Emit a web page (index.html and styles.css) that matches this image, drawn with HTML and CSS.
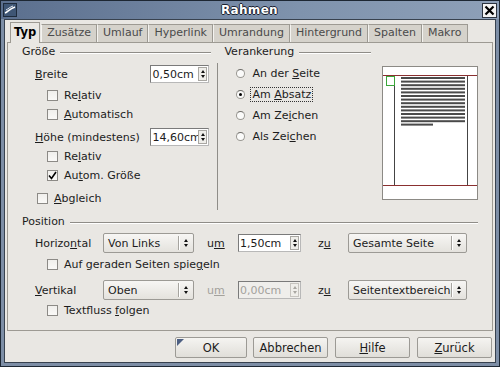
FILE: index.html
```html
<!DOCTYPE html>
<html lang="de">
<head>
  <meta charset="UTF-8" />
  <title>Rahmen</title>
  <link rel="stylesheet" href="styles.css">
</head>
<body>

<div class="window">
  <div class="titlebar">
    <span class="app-icon">
      <svg width="14" height="14" viewBox="0 0 14 14">
        <rect x="0.5" y="0.5" width="13" height="13" fill="#3f5675" stroke="#1e2b3c"/>
        <path d="M2 10 C5 9 6 6 12 4" stroke="#fff" stroke-width="1.6" fill="none"/>
        <path d="M3 7 C5 6 7 4 10 3" stroke="#dfe6ef" stroke-width="1" fill="none"/>
      </svg>
    </span>
    <span class="title">Rahmen</span>
    <span class="close">
      <svg width="11" height="11" viewBox="0 0 11 11">
        <path d="M1.5 1.5 L9.5 9.5 M9.5 1.5 L1.5 9.5" stroke="#000" stroke-width="2.2"/>
      </svg>
    </span>
  </div>

  <div class="client">
    <div class="tabs">
      <div class="tab active">Typ</div>
      <div class="tab">Zusätze</div>
      <div class="tab">Umlauf</div>
      <div class="tab">Hyperlink</div>
      <div class="tab">Umrandung</div>
      <div class="tab">Hintergrund</div>
      <div class="tab">Spalten</div>
      <div class="tab">Makro</div>
    </div>

    <div class="page">
      <div class="top">
        <!-- Größe -->
        <div class="size">
          <div class="group-head"><span>Größe</span></div>
          <div class="field-row first">
            <span class="label"><u>B</u>reite</span>
            <div class="spin"><span class="spin-text">0,50cm</span><span class="spin-btns"><i class="up"></i><i class="down"></i></span></div>
          </div>
          <div class="check-row gap3"><span class="box"></span><span>Re<u>l</u>ativ</span></div>
          <div class="check-row"><span class="box"></span><span><u>A</u>utomatisch</span></div>
          <div class="field-row second">
            <span class="label"><u>H</u>öhe (mindestens)</span>
            <div class="spin"><span class="spin-text">14,60cm</span><span class="spin-btns"><i class="up"></i><i class="down"></i></span></div>
          </div>
          <div class="check-row gap1"><span class="box"></span><span>Re<u>l</u>ativ</span></div>
          <div class="check-row"><span class="box"><svg width="9" height="9" viewBox="0 0 9 9"><path d="M1 4.5 L3.5 7.5 L8 1" stroke="#000" stroke-width="1.6" fill="none"/></svg></span><span>Au<u>t</u>om. Größe</span></div>
          <div class="check-row outer"><span class="box"></span><span><u>A</u>bgleich</span></div>
        </div>

        <div class="vsep"></div>

        <!-- Verankerung -->
        <div class="anchor">
          <div class="group-head"><span>Verankerung</span></div>
          <div class="radios">
            <div class="radio-row"><span class="radio"></span><span>An der <u>S</u>eite</span></div>
            <div class="radio-row"><span class="radio on"></span><span class="focus">Am <u>A</u>bsatz</span></div>
            <div class="radio-row"><span class="radio"></span><span>Am Ze<u>i</u>chen</span></div>
            <div class="radio-row"><span class="radio"></span><span>Als Zei<u>c</u>hen</span></div>
          </div>
        </div>

        <div class="preview">
          <svg width="94" height="132" viewBox="0 0 94 132">
            <line x1="0" y1="8.5" x2="94" y2="8.5" stroke="#8a3030"/>
            <line x1="0" y1="118.5" x2="94" y2="118.5" stroke="#8a3030"/>
            <line x1="11.5" y1="9" x2="11.5" y2="118" stroke="#444"/>
            <line x1="84.5" y1="9" x2="84.5" y2="118" stroke="#444"/>
            <rect x="3.5" y="9.5" width="8" height="9" fill="none" stroke="#3aa63a"/>
            <g fill="#4a4a4a">
              <rect x="18" y="10" width="64" height="2"/>
              <rect x="18" y="13.6" width="64" height="2"/>
              <rect x="18" y="17.2" width="64" height="2"/>
              <rect x="18" y="20.8" width="64" height="2"/>
              <rect x="18" y="24.4" width="64" height="2"/>
              <rect x="18" y="28" width="64" height="2"/>
              <rect x="18" y="31.6" width="64" height="2"/>
              <rect x="18" y="35.2" width="64" height="2"/>
              <rect x="18" y="38.8" width="64" height="2"/>
              <rect x="18" y="42.4" width="64" height="2"/>
              <rect x="18" y="46" width="64" height="2"/>
              <rect x="18" y="49.6" width="64" height="2"/>
              <rect x="18" y="53.2" width="64" height="2"/>
              <rect x="18" y="56.6" width="32" height="2"/>
            </g>
          </svg>
        </div>
      </div>

      <!-- Position -->
      <div class="position">
        <div class="group-head"><span>Position</span></div>
        <div class="pos-row first">
          <span>Horizo<u>n</u>tal</span>
          <div class="select"><span class="select-text">Von Links</span><span class="select-sep"></span><span class="select-arrows"><i class="up"></i><i class="down"></i></span></div>
          <span class="um">u<u>m</u></span>
          <div class="spin wide"><span class="spin-text">1,50cm</span><span class="spin-btns"><i class="up"></i><i class="down"></i></span></div>
          <span class="zu">z<u>u</u></span>
          <div class="select"><span class="select-text">Gesamte Seite</span><span class="select-sep"></span><span class="select-arrows"><i class="up"></i><i class="down"></i></span></div>
        </div>
        <div class="check-row gap2"><span class="box"></span><span>Auf geraden Seiten spie<u>g</u>eln</span></div>
        <div class="pos-row second">
          <span><u>V</u>ertikal</span>
          <div class="select"><span class="select-text">Oben</span><span class="select-sep"></span><span class="select-arrows"><i class="up"></i><i class="down"></i></span></div>
          <span class="um disabled">u<u>m</u></span>
          <div class="spin wide disabled"><span class="spin-text">0,00cm</span><span class="spin-btns"><i class="up"></i><i class="down"></i></span></div>
          <span class="zu">z<u>u</u></span>
          <div class="select"><span class="select-text">Seitentextbereich</span><span class="select-sep"></span><span class="select-arrows"><i class="up"></i><i class="down"></i></span></div>
        </div>
        <div class="check-row gap1"><span class="box"></span><span>Textfluss <u>f</u>olgen</span></div>
      </div>
    </div>

    <div class="buttons">
      <button class="btn default">OK</button>
      <button class="btn">Abbrechen</button>
      <button class="btn"><u>H</u>ilfe</button>
      <button class="btn"><u>Z</u>urück</button>
    </div>
  </div>
</div>

</body>
</html>
```

FILE: styles.css
```css
* {
  margin: 0; padding: 0; box-sizing: border-box;
}
body {
  width: 500px;
  height: 367px;
  overflow: hidden;
  background: #1d2733;
  color: #1c1c1c;
  font-family: "DejaVu Sans", sans-serif;
  font-size: 11px;
}
u {
  text-decoration: underline;
  text-underline-offset: 1px;
}

/* Window frame */
.window {
  width: 500px;
  height: 367px;
  border: 1px solid #1d2733;
  background: #7d8ea6;
  display: flex;
  flex-direction: column;
}
.titlebar {
  height: 18px;
  display: flex;
  align-items: center;
  padding: 0 2px 0 2px;
  background: linear-gradient(to right, #5b6f8e, #7f93ad 60%, #8ea0b8);
}
.app-icon {
  width: 14px;
  height: 14px;
  display: flex;
}
.title {
  flex: 1;
  text-align: center;
  color: #fff;
  font-weight: 700;
  font-size: 12px;
  letter-spacing: 0.3px;
  text-shadow: 1px 0 0 #1a2230, -1px 0 0 #1a2230, 0 1px 0 #1a2230, 0 -1px 0 #1a2230;
}
.close {
  width: 15px;
  height: 15px;
  background: #f4f4f4;
  border: 1px solid #2c3440;
  display: flex;
  align-items: center;
  justify-content: center;
}
.client {
  flex: 1;
  margin: 0 3px 3px;
  border: 1px solid #38424f;
  background: #e9e7e3;
  display: flex;
  flex-direction: column;
}

/* Tabs */
.tabs {
  display: flex;
  align-items: flex-end;
  height: 20px;
  margin: 2px 2px 0;
  padding-left: 3px;
}
.tab {
  height: 18px;
  line-height: 16px;
  padding: 0 5px;
  background: #d5d2cb;
  border: 1px solid #9d9a93;
  border-bottom: none;
  color: #4a4a4a;
}
.tab + .tab {
  border-left-color: #f4f3f0;
}
.tab.active {
  height: 21px;
  margin-right: 1px;
  margin-bottom: -1px;
  line-height: 19px;
  padding: 0 3px;
  background: #e9e7e3;
  color: #000;
  font-weight: 700;
  font-size: 11.5px;
  position: relative;
  z-index: 1;
}

/* Tab page */
.page {
  margin: 0 2px;
  height: 289px;
  border: 1px solid #9d9a93;
  padding: 2px 14px 0;
}
.top {
  display: flex;
  align-items: flex-start;
}
.size {
  width: 190px;
}
.vsep {
  width: 1px;
  height: 147px;
  margin: 18px 6px 0;
  background: #8f8d88;
}
.anchor {
  width: 147px;
}
.group-head {
  display: flex;
  align-items: center;
  gap: 5px;
  height: 14px;
  line-height: 14px;
}
.group-head::after {
  content: "";
  flex: 1;
  height: 1px;
  background: #8f8d88;
  box-shadow: 0 1px 0 #fff;
}

.field-row {
  display: flex;
  align-items: center;
  height: 18px;
  margin: 0 2px 0 13px;
}
.field-row.first { margin-top: 6px; }
.field-row.second { margin-top: 4px; }
.field-row .label { flex: 1; }

.check-row {
  display: flex;
  align-items: center;
  gap: 6px;
  height: 19px;
  margin-left: 25px;
}
.check-row.gap1 { margin-top: 1px; }
.check-row.gap2 { margin-top: 2px; }
.check-row.gap3 { margin-top: 3px; }
.check-row.outer {
  margin-top: 4px;
  margin-left: 15px;
}
.box {
  width: 11px;
  height: 11px;
  border: 1px solid #8c8a86;
  background: linear-gradient(#f0efec, #faf9f7);
  display: flex;
  align-items: center;
  justify-content: center;
}

/* Spin field */
.spin {
  display: flex;
  align-items: center;
  width: 59px;
  height: 18px;
  border: 1px solid #7a7a7a;
  border-right-color: #b8b8b8;
  border-bottom-color: #b8b8b8;
  background: #fff;
}
.spin.wide { width: 63px; }
.spin-text {
  flex: 1;
  min-width: 0;
  padding-left: 1px;
  white-space: nowrap;
  font-size: 11px;
}
.spin-btns {
  flex: none;
  width: 9px;
  height: 14px;
  margin-right: 1px;
  border: 1px solid #a9a7a2;
  background: #efeeea;
  display: flex;
  flex-direction: column;
  align-items: center;
  justify-content: center;
  gap: 2px;
}
.up, .down {
  display: block;
  width: 0;
  height: 0;
  border-left: 2.5px solid transparent;
  border-right: 2.5px solid transparent;
}
.up { border-bottom: 3px solid #111; }
.down { border-top: 3px solid #111; }
.spin.disabled {
  background: #efeeeb;
  color: #a3a19c;
}
.spin.disabled .spin-btns { border-color: #c6c4bf; }
.spin.disabled .up { border-bottom-color: #a8a6a1; }
.spin.disabled .down { border-top-color: #a8a6a1; }

/* Radios */
.radios {
  margin-top: 4px;
}
.radio-row {
  display: flex;
  align-items: center;
  gap: 7px;
  height: 21px;
  margin-left: 12px;
}
.radio {
  width: 9px;
  height: 9px;
  border-radius: 50%;
  border: 1px solid #9a9893;
  border-top-color: #6f6d69;
  background: #fbfbfa;
  display: flex;
  align-items: center;
  justify-content: center;
}
.radio.on::after {
  content: "";
  width: 3px;
  height: 3px;
  border-radius: 50%;
  background: #000;
}
.focus {
  outline: 1px dotted #333;
  padding: 0 1px;
  margin-left: -1px;
}

/* Preview */
.preview {
  width: 96px;
  height: 134px;
  margin: 21px 0 0 11px;
  background: #fff;
  border: 1px solid #8c8a85;
  display: flex;
}

/* Position */
.position {
  margin-top: 5px;
}
.pos-row {
  display: grid;
  grid-template-columns: 68px 91px 44px 63px 47px 119px;
  align-items: center;
  height: 20px;
  margin-left: 13px;
}
.pos-row.first { margin-top: 4px; }
.pos-row.second { margin-top: 6px; }
.um { padding-left: 13px; }
.zu { padding-left: 17px; }
.disabled { color: #a3a19c; }
.pos-row .spin { height: 18px; }

.select {
  display: flex;
  align-items: center;
  height: 20px;
  border: 1px solid #9c9a95;
  border-radius: 2px;
  background: linear-gradient(#f7f6f4, #e4e2dd);
  padding-left: 4px;
}
.select-text {
  flex: 1;
  min-width: 0;
  white-space: nowrap;
  font-size: 11px;
}
.select-sep {
  flex: none;
  width: 1px;
  height: 14px;
  background: #a6a49f;
  box-shadow: 1px 0 0 #fff;
}
.select-arrows {
  flex: none;
  width: 14px;
  display: flex;
  flex-direction: column;
  align-items: center;
  gap: 2px;
}

/* Buttons */
.buttons {
  display: flex;
  justify-content: flex-end;
  gap: 7px;
  margin: 6px 3px 0 0;
}
.btn {
  width: 75px;
  height: 21px;
  border: 1px solid #9c9a95;
  border-radius: 2px;
  background: linear-gradient(#f5f4f1, #e0ded9);
  font-family: "DejaVu Sans", sans-serif;
  font-size: 11.5px;
  color: #1c1c1c;
  position: relative;
}
.btn.default {
  width: 72px;
  margin-right: -1px;
}
.btn.default::before {
  content: "";
  position: absolute;
  left: 1px;
  top: 1px;
  border-top: 7px solid #4d5f82;
  border-right: 7px solid transparent;
}
```
